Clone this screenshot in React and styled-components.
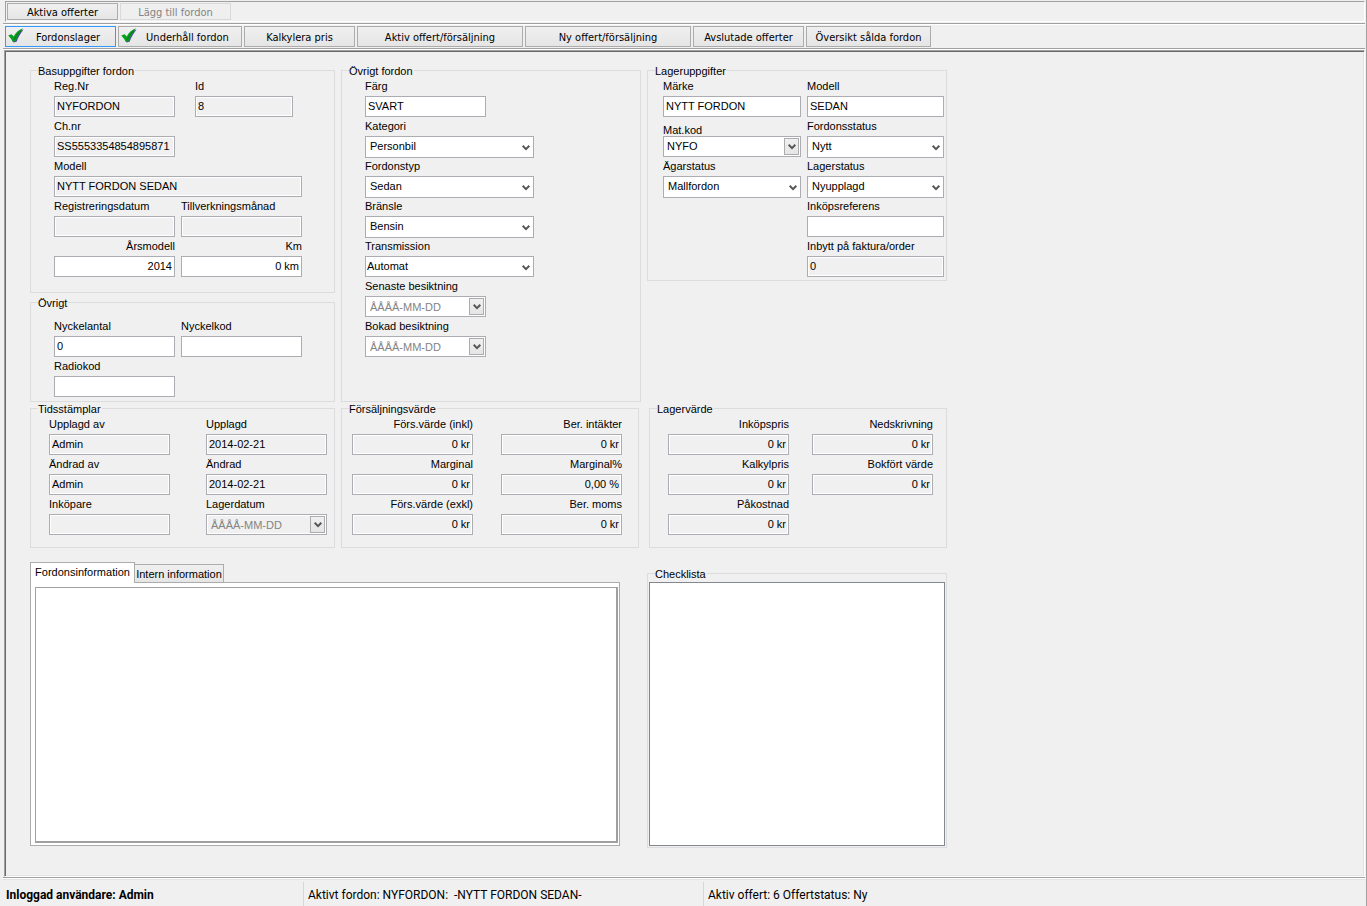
import React, { useState } from "react";
import styled, { createGlobalStyle, css } from "styled-components";

const GlobalStyle = createGlobalStyle`
  *, *::before, *::after { box-sizing: border-box; }
  body { margin: 0; background: #f0f0f0; }
  button, input, select, textarea { font: inherit; color: inherit; margin: 0; border-radius: 0; }
`;

const formFont = css`
  font-family: "Liberation Sans", Arial, sans-serif;
  font-size: 11px;
`;

const Window = styled.div`
  min-height: 100vh;
  display: flex;
  flex-direction: column;
  padding: 1px 1px 0 3px;
  background: #f0f0f0;
  color: #000;
  border-right: 1px solid #a0a0a0;
  ${formFont}
`;

const ToolBar = styled.div`
  display: flex;
  gap: 2px;
  font-family: "DejaVu Sans Condensed", "DejaVu Sans", sans-serif;
  font-size: 11px;
`;

const ModeBar = styled(ToolBar)`
  height: 21px;
  margin-left: 2px;
  padding: 1px;
  border: solid;
  border-width: 1px;
  border-color: #a0a0a0 #fff #fff #a0a0a0;
`;

const NavBar = styled(ToolBar)`
  height: 26px;
  margin-top: 1px;
  padding: 2px 2px 1px;
  border-top: 1px solid #a0a0a0;
  border-bottom: 1px solid #a0a0a0;
  box-shadow: inset 0 1px #fff, 0 1px #fff;
`;

const BarButton = styled.button`
  position: relative;
  width: ${(p) => p.$width || 111}px;
  height: 100%;
  padding: 2px 0 0 ${(p) => (p.$checked ? 15 : 0)}px;
  border: 1px solid ${(p) => (p.$active ? "#3399ff" : "#acacac")};
  background: linear-gradient(#f0f0f0, #e5e5e5);
  white-space: nowrap;
  line-height: 14px;

  &:disabled {
    color: #838383;
    background: #efefef;
    border-color: #d9d9d9;
  }
`;

const CheckIcon = styled.svg`
  position: absolute;
  left: 2px;
  top: 1px;
`;

const Main = styled.main`
  flex: 1;
  display: flex;
  flex-direction: column;
  margin: 1px 0 0 1px;
  padding: 13px 0 28px 25px;
  border: 1px solid;
  border-color: #a0a0a0 #fff #fff #a0a0a0;
  box-shadow: inset 1px 1px #696969, inset -1px -1px #e3e3e3;
`;

const Form = styled.form`
  flex: 1;
  display: grid;
  grid-template-columns: 305px 300px 300px;
  grid-template-rows: auto auto 1fr;
  column-gap: 6px;
`;

const Stack = styled.div`
  display: flex;
  flex-direction: column;
  gap: 3px;
`;

const Group = styled.fieldset`
  min-width: 0;
  margin: ${(p) => p.$top || 0}px 0 0;
  padding: 0 0 ${(p) => p.$bottom || 0}px 7px;
  border: 1px solid #dcdcdc;
  align-self: ${(p) => (p.$short ? "start" : "stretch")};
  justify-self: ${(p) => p.$justify || "stretch"};
  width: ${(p) => (p.$justify ? "298px" : "auto")};
`;

const Legend = styled.legend`
  padding: 0 1px 0 0;
  height: 12px;
  line-height: 15px;
`;

const Fields = styled.div`
  display: grid;
  grid-template-columns: ${(p) => p.$columns};
  grid-auto-rows: 40px;
  column-gap: ${(p) => p.$gap || 6}px;
  margin-left: ${(p) => p.$indent}px;
  padding-top: ${(p) => p.$top || 1}px;
`;

const Cell = styled.div`
  display: flex;
  flex-direction: column;
  grid-column: ${(p) => p.$column || "auto"};
  width: ${(p) => (p.$width ? p.$width + "px" : "auto")};
  margin-left: ${(p) => p.$inset || 0}px;
`;

const Label = styled.label`
  flex: none;
  height: 19px;
  line-height: ${(p) => (p.$low ? 12 : 19)}px;
  padding-top: ${(p) => (p.$low ? 7 : 0)}px;
  text-align: ${(p) => (p.$right ? "right" : "left")};
  white-space: nowrap;
`;

const box = css`
  width: 100%;
  height: 21px;
  border: 1px solid #abadb3;
  background: #fff;
  outline: none;
`;

const TextBox = styled.input`
  ${box}
  padding: 0 2px 1px;
  text-align: ${(p) => (p.$right ? "right" : "left")};

  &:read-only {
    background: #f0f0f0;
    box-shadow: inset 0 0 0 1px #fff;
  }
`;

const Picker = styled.div`
  position: relative;
  flex: none;
  height: ${(p) => (p.$boxed || p.$flush ? 21 : 22)}px;
`;

const Select = styled.select`
  ${box}
  height: 100%;
  padding: 0 20px 2px ${(p) => (p.$flush ? 1 : p.$boxed ? 3 : 4)}px;
  appearance: none;
`;

const Arrow = styled.span`
  position: absolute;
  right: 3px;
  top: 3px;
  display: grid;
  place-items: center;
  width: 11px;
  height: 17px;
  pointer-events: none;

  ${(p) =>
    p.$boxed &&
    css`
      right: 2px;
      top: 2px;
      width: 15px;
      border: 1px solid #acacac;
      background: linear-gradient(#f0f0f0, #e5e5e5);
    `}
`;

const DateFrame = styled.div`
  ${box}
  display: flex;
  padding: 1px;
  color: #838383;
  background: ${(p) => (p.$locked ? "#f0f0f0" : "#fff")};
  box-shadow: inset 0 0 0 1px #fff;
`;

const DateInput = styled.input`
  flex: 1;
  min-width: 0;
  padding: 0 0 0 3px;
  border: 0;
  background: transparent;
  outline: none;

  &::placeholder { color: #838383; opacity: 1; }
`;

const DateButton = styled.button`
  display: grid;
  place-items: center;
  width: 15px;
  height: 17px;
  padding: 0;
  border: 1px solid #acacac;
  background: linear-gradient(#f0f0f0, #e5e5e5);
`;

const Information = styled.section`
  grid-column: 1 / 3;
  display: flex;
  flex-direction: column;
  margin: 14px 21px 2px 0;
`;

const TabList = styled.div`
  display: flex;
  align-items: flex-end;
  height: 21px;
`;

const Tab = styled.button`
  height: ${(p) => (p.$active ? 21 : 19)}px;
  width: ${(p) => (p.$active ? 105 : 90)}px;
  margin-left: ${(p) => (p.$active ? 0 : -1)}px;
  padding: ${(p) => (p.$active ? "0 0 2px" : "1px 0 0")};
  border: 1px solid #acacac;
  border-bottom-width: ${(p) => (p.$active ? 0 : 1)}px;
  background: ${(p) => (p.$active ? "#fff" : "linear-gradient(#f0f0f0, #e5e5e5)")};
  position: relative;
  z-index: ${(p) => (p.$active ? 1 : 0)};
  white-space: nowrap;
`;

const TabPanel = styled.div`
  flex: 1;
  display: flex;
  margin-top: -1px;
  padding: 4px 1px 2px 4px;
  border: 1px solid #acacac;
  background: #fff;
`;

const Notes = styled.textarea`
  flex: 1;
  min-height: 200px;
  padding: 4px;
  border: solid #a0a0a0;
  border-width: 1px 2px 2px 1px;
  resize: none;
  outline: none;
`;

const Checklist = styled.ul`
  height: 264px;
  margin: 3px 0 0 -6px;
  padding: 0;
  list-style: none;
  border: 1px solid #828790;
  background: #fff;
`;

const ChecklistGroup = styled(Group)`
  padding-right: 1px;
`;

const StatusBar = styled.footer`
  display: grid;
  grid-template-columns: 300px 400px 1fr;
  height: 29px;
  padding-top: 4px;
  border-top: 1px solid #a0a0a0;
  box-shadow: inset 0 1px #fff, inset 0 2px #e3e3e3;
  font-family: Roboto, "Open Sans", sans-serif;
  font-size: 12px;
`;

const StatusItem = styled.div`
  padding: 5px 3px 0 ${(p) => (p.$strong ? 3 : 4)}px;
  line-height: 17px;
  white-space: pre;
  font-weight: ${(p) => (p.$strong ? 700 : 400)};
  border-left: ${(p) => (p.$strong ? "0" : "1px solid #d7d7d7")};
`;

const Chevron = () => (
  <svg width="8" height="6" viewBox="0 0 8 6" aria-hidden="true">
    <path d="M0.7 0.8L4 4.1L7.3 0.8" fill="none" stroke="#555" strokeWidth="2" />
  </svg>
);

const Check = () => (
  <CheckIcon width="17" height="17" viewBox="0 0 17 17" aria-hidden="true">
    <path d="M2 9L4.5 8.2L6.2 10.2C8.4 6.4 11 3.4 15.6 1.6C12.4 5.4 10.2 9.4 8.6 13.8L5.6 14.6C4.8 12.4 3.6 10.6 2 9Z" fill="#26268a" opacity="0.8" />
    <path d="M0.2 7.6L3.6 6.2L5.7 8.6C7.8 4.8 10.4 2 14.8 0.6C11.6 4.6 9.4 8.4 7.8 12.9L4.6 13.8C3.8 11.6 2.2 9.4 0.2 7.6Z" fill="#04a01a" />
    <path d="M6.2 11.8C8.2 7.6 10.8 4 14.4 1.2" fill="none" stroke="#06701a" strokeWidth="0.8" />
  </CheckIcon>
);

function TextField({ id, label, value = "", right, readOnly, ...cell }) {
  return (
    <Cell {...cell}>
      <Label htmlFor={id} $right={right}>{label}</Label>
      <TextBox id={id} defaultValue={value} readOnly={readOnly} $right={right} />
    </Cell>
  );
}

function SelectField({ id, label, value, boxed, low, flush, ...cell }) {
  return (
    <Cell {...cell}>
      <Label htmlFor={id} $low={low}>{label}</Label>
      <Picker $boxed={boxed} $flush={flush}>
        <Select id={id} defaultValue={value} $boxed={boxed} $flush={flush}>
          <option>{value}</option>
        </Select>
        <Arrow $boxed={boxed}><Chevron /></Arrow>
      </Picker>
    </Cell>
  );
}

function DateField({ id, label, locked, ...cell }) {
  return (
    <Cell {...cell}>
      <Label htmlFor={id}>{label}</Label>
      <DateFrame $locked={locked}>
        <DateInput id={id} placeholder="ÅÅÅÅ-MM-DD" disabled={locked} />
        <DateButton type="button" aria-label={label} disabled={locked}><Chevron /></DateButton>
      </DateFrame>
    </Cell>
  );
}

const pages = [
  { name: "Fordonslager", checked: true },
  { name: "Underhåll fordon", checked: true, width: 124 },
  { name: "Kalkylera pris" },
  { name: "Aktiv offert/försäljning", width: 166 },
  { name: "Ny offert/försäljning", width: 166 },
  { name: "Avslutade offerter" },
  { name: "Översikt sålda fordon", width: 125 },
];

export default function App() {
  const [page, setPage] = useState("Fordonslager");
  const [tab, setTab] = useState("Fordonsinformation");

  return (
    <Window>
      <GlobalStyle />
      <ModeBar>
        <BarButton type="button">Aktiva offerter</BarButton>
        <BarButton type="button" disabled>Lägg till fordon</BarButton>
      </ModeBar>
      <NavBar as="nav">
        {pages.map((p) => (
          <BarButton
            key={p.name}
            type="button"
            $width={p.width}
            $checked={p.checked}
            $active={p.name === page}
            onClick={() => setPage(p.name)}
          >
            {p.checked && <Check />}
            {p.name}
          </BarButton>
        ))}
      </NavBar>

      <Main>
        <Form onSubmit={(e) => e.preventDefault()}>
          <Stack>
            <Group $bottom={15}>
              <Legend>Basuppgifter fordon</Legend>
              <Fields $columns="121px 121px" $indent={16}>
                <TextField id="regnr" label="Reg.Nr" value="NYFORDON" readOnly />
                <TextField id="fid" label="Id" value="8" readOnly $width={98} $inset={14} />
                <TextField id="chnr" label="Ch.nr" value="SS5553354854895871" readOnly $column="1" />
                <TextField id="modell" label="Modell" value="NYTT FORDON SEDAN" readOnly $column="1 / 3" />
                <TextField id="regdatum" label="Registreringsdatum" readOnly />
                <TextField id="tillv" label="Tillverkningsmånad" readOnly />
                <TextField id="arsmodell" label="Årsmodell" value="2014" right />
                <TextField id="km" label="Km" value="0 km" right />
              </Fields>
            </Group>
            <Group $bottom={4}>
              <Legend>Övrigt</Legend>
              <Fields $columns="121px 121px" $indent={16} $top={9}>
                <TextField id="nyckelantal" label="Nyckelantal" value="0" />
                <TextField id="nyckelkod" label="Nyckelkod" />
                <TextField id="radiokod" label="Radiokod" />
              </Fields>
            </Group>
          </Stack>

          <Group>
            <Legend>Övrigt fordon</Legend>
            <Fields $columns="169px" $indent={16}>
              <TextField id="farg" label="Färg" value="SVART" $width={121} />
              <SelectField id="kategori" label="Kategori" value="Personbil" />
              <SelectField id="fordonstyp" label="Fordonstyp" value="Sedan" />
              <SelectField id="bransle" label="Bränsle" value="Bensin" />
              <SelectField id="transmission" label="Transmission" value="Automat" flush />
              <DateField id="senaste" label="Senaste besiktning" $width={121} />
              <DateField id="bokad" label="Bokad besiktning" $width={121} />
            </Fields>
          </Group>

          <Group $short $bottom={3}>
            <Legend>Lageruppgifter</Legend>
            <Fields $columns="138px 137px" $indent={8}>
              <TextField id="marke" label="Märke" value="NYTT FORDON" />
              <TextField id="lmodell" label="Modell" value="SEDAN" />
              <SelectField id="matkod" label="Mat.kod" value="NYFO" boxed low />
              <SelectField id="fstatus" label="Fordonsstatus" value="Nytt" />
              <SelectField id="agarstatus" label="Ägarstatus" value="Mallfordon" />
              <SelectField id="lagerstatus" label="Lagerstatus" value="Nyupplagd" />
              <TextField id="inkopsref" label="Inköpsreferens" $column="2" />
              <TextField id="inbytt" label="Inbytt på faktura/order" value="0" readOnly $column="2" />
            </Fields>
          </Group>

          <Group $bottom={12}>
            <Legend>Tidsstämplar</Legend>
            <Fields $columns="121px 121px" $gap={36} $indent={11}>
              <TextField id="upplagdav" label="Upplagd av" value="Admin" readOnly />
              <TextField id="upplagd" label="Upplagd" value="2014-02-21" readOnly />
              <TextField id="andradav" label="Ändrad av" value="Admin" readOnly />
              <TextField id="andrad" label="Ändrad" value="2014-02-21" readOnly />
              <TextField id="inkopare" label="Inköpare" readOnly />
              <DateField id="lagerdatum" label="Lagerdatum" locked />
            </Fields>
          </Group>

          <Group $bottom={12} $justify="start">
            <Legend>Försäljningsvärde</Legend>
            <Fields $columns="121px 121px" $gap={28} $indent={3}>
              <TextField id="inkl" label="Förs.värde (inkl)" value="0 kr" right readOnly />
              <TextField id="intakter" label="Ber. intäkter" value="0 kr" right readOnly />
              <TextField id="marginal" label="Marginal" value="0 kr" right readOnly />
              <TextField id="marginalp" label="Marginal%" value="0,00 %" right readOnly />
              <TextField id="exkl" label="Förs.värde (exkl)" value="0 kr" right readOnly />
              <TextField id="moms" label="Ber. moms" value="0 kr" right readOnly />
            </Fields>
          </Group>

          <Group $bottom={12} $justify="end">
            <Legend>Lagervärde</Legend>
            <Fields $columns="121px 121px" $gap={23} $indent={11}>
              <TextField id="inkopspris" label="Inköpspris" value="0 kr" right readOnly />
              <TextField id="nedskrivning" label="Nedskrivning" value="0 kr" right readOnly />
              <TextField id="kalkylpris" label="Kalkylpris" value="0 kr" right readOnly />
              <TextField id="bokfort" label="Bokfört värde" value="0 kr" right readOnly />
              <TextField id="pakostnad" label="Påkostnad" value="0 kr" right readOnly />
            </Fields>
          </Group>

          <Information>
            <TabList role="tablist">
              {["Fordonsinformation", "Intern information"].map((name) => (
                <Tab
                  key={name}
                  type="button"
                  role="tab"
                  aria-selected={tab === name}
                  $active={tab === name}
                  onClick={() => setTab(name)}
                >
                  {name}
                </Tab>
              ))}
            </TabList>
            <TabPanel role="tabpanel">
              <Notes aria-label={tab} />
            </TabPanel>
          </Information>

          <ChecklistGroup $top={19} $bottom={1}>
            <Legend>Checklista</Legend>
            <Checklist />
          </ChecklistGroup>
        </Form>
      </Main>

      <StatusBar>
        <StatusItem $strong>Inloggad användare: Admin</StatusItem>
        <StatusItem>{"Aktivt fordon: NYFORDON:  -NYTT FORDON SEDAN-"}</StatusItem>
        <StatusItem>Aktiv offert: 6 Offertstatus: Ny</StatusItem>
      </StatusBar>
    </Window>
  );
}
